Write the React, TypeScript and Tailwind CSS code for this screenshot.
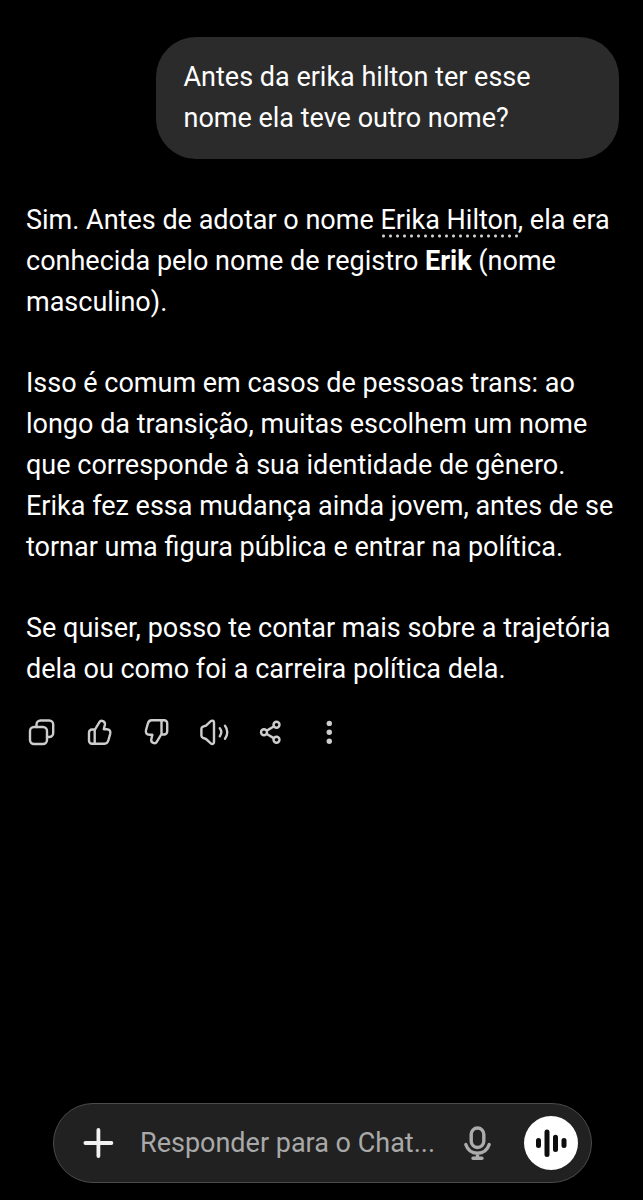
import type { ReactNode } from 'react';

interface ActionProps {
  label: string;
  children: ReactNode;
}

const THUMB_PATH =
  'M10.7 13 L15.6 4.8 C16.8 2.8 21.6 3.8 20.9 7.8 L19.8 12.2 H22.8 C25.6 12.2 26.8 14 26.2 16.7 L24.4 23.3 C23.8 25.6 22.5 26.7 20.5 26.7 H8 a3 3 0 0 1 -3 -3 V15.5 a3 3 0 0 1 3 -3 H10.7 V26.5';

function Action({ label, children }: ActionProps) {
  return (
    <button type="button" aria-label={label} className="size-[30px] shrink-0 text-[#cdcdcd]">
      <svg
        viewBox="0 0 30 30"
        className="size-full"
        fill="none"
        stroke="currentColor"
        strokeWidth="2.4"
        strokeLinecap="round"
        strokeLinejoin="round"
      >
        {children}
      </svg>
    </button>
  );
}

function MessageActions() {
  return (
    <div className="mt-[27px] flex w-[318px] items-center justify-between">
      <Action label="Copiar">
        <rect x="4" y="10" width="17" height="17" rx="4" />
        <path d="M10.5 10 V7.5 a4 4 0 0 1 4 -4 H23.2 a4 4 0 0 1 4 4 V16 a4 4 0 0 1 -4 4 H21" />
      </Action>
      <Action label="Boa resposta">
        <path d={THUMB_PATH} />
      </Action>
      <Action label="Resposta ruim">
        <path d={THUMB_PATH} transform="rotate(180 15.6 15)" />
      </Action>
      <Action label="Ler em voz alta">
        <path d="M15 5.4 V25.2 C15 27 13 27.4 11.8 26.4 L7 22 L4 20.9 C2.9 20.4 2.4 19.8 2.4 18.8 V11.8 C2.4 10.8 2.9 10.2 4 9.7 L7 8.6 L11.8 4.2 C13 3.2 15 3.6 15 5.4 Z" />
        <path d="M20.8 11.3 C22.6 13.6 22.6 16.8 20.8 19.2" />
        <path d="M26 8.7 C29 12.5 29 18 26 21.8" />
      </Action>
      <Action label="Compartilhar">
        <circle cx="8" cy="15.3" r="3" />
        <circle cx="20.5" cy="7.8" r="3" />
        <circle cx="20.5" cy="22.8" r="3" />
        <path d="M10.8 13.6 L17.7 9.5 M10.8 17 L17.7 21.1" />
      </Action>
      <Action label="Mais opções">
        <g fill="currentColor" stroke="none">
          <circle cx="15.3" cy="6.4" r="2.7" />
          <circle cx="15.3" cy="15.3" r="2.7" />
          <circle cx="15.3" cy="24.2" r="2.7" />
        </g>
      </Action>
    </div>
  );
}

function Composer() {
  return (
    <form
      className="mr-[51px] ml-[53px] mb-[17px] flex items-center rounded-full border border-[#4b4b4b] bg-[#212121] py-3 pr-[13px] pl-7"
      onSubmit={(e) => e.preventDefault()}
    >
      <button type="button" aria-label="Adicionar" className="size-8 shrink-0 text-[#f2f2f2]">
        <svg viewBox="0 0 32 32" className="size-full" stroke="currentColor" strokeWidth="3.8" strokeLinecap="round">
          <path d="M16.4 3 V29 M3.4 16 H29.4" />
        </svg>
      </button>
      <input
        type="text"
        aria-label="Mensagem"
        placeholder="Responder para o Chat..."
        className="ml-[26px] min-w-0 flex-1 bg-transparent text-white outline-none placeholder:text-[#a9a9a9]"
      />
      <button type="button" aria-label="Ditar" className="mr-[29px] size-9 shrink-0 text-[#acacac]">
        <svg
          viewBox="0 0 36 36"
          className="size-full"
          fill="none"
          stroke="currentColor"
          strokeWidth="3.4"
          strokeLinecap="round"
          strokeLinejoin="round"
        >
          <rect x="12.2" y="3" width="12.6" height="19.5" rx="6.3" />
          <path d="M6.8 19.5 C8.8 25.5 13 28.2 18.5 28.2 C24 28.2 28.2 25.5 30.2 19.5 M18.5 28.2 V33 M14 33.2 H23" />
        </svg>
      </button>
      <button
        type="button"
        aria-label="Modo de voz"
        className="flex size-[54px] shrink-0 items-center justify-center rounded-full bg-white text-[#0d0d0d]"
      >
        <svg viewBox="0 0 54 54" className="size-full" stroke="currentColor" strokeWidth="5" strokeLinecap="round">
          <path d="M14.5 24.5 V29.5 M23 16 V38.5 M31.5 21.2 V33.5 M40 24.5 V29.5" />
        </svg>
      </button>
    </form>
  );
}

export default function App() {
  return (
    <div className="flex min-h-screen flex-col bg-black font-['Roboto',sans-serif] text-[27px] leading-[41px] text-white">
      <main className="flex flex-1 flex-col pt-[37px] pr-6 pl-[26px]">
        <div className="w-[78%] self-end rounded-[40px] bg-[#2b2b2b] px-[27px] py-5">
          <p>Antes da erika hilton ter esse nome ela teve outro nome?</p>
        </div>

        <article className="mt-[41px] flex flex-col gap-10">
          <p>
            Sim. Antes de adotar o nome{' '}
            <a
              href="#erika-hilton"
              className="bg-[radial-gradient(circle,#d0d0d0_1px,transparent_2px)] bg-[length:7px_4px] bg-bottom-left bg-repeat-x pb-[2px]"
            >
              Erika Hilton
            </a>
            , ela era conhecida pelo nome de registro <strong className="font-bold">Erik</strong> (nome
            masculino).
          </p>
          <p>
            Isso é comum em casos de pessoas trans: ao longo da transição, muitas escolhem um nome que
            corresponde à sua identidade de gênero. Erika fez essa mudança ainda jovem, antes de se tornar
            uma figura pública e entrar na política.
          </p>
          <p>
            Se quiser, posso te contar mais sobre a trajetória dela ou como foi a carreira política dela.
          </p>
        </article>

        <MessageActions />
      </main>

      <Composer />
    </div>
  );
}
